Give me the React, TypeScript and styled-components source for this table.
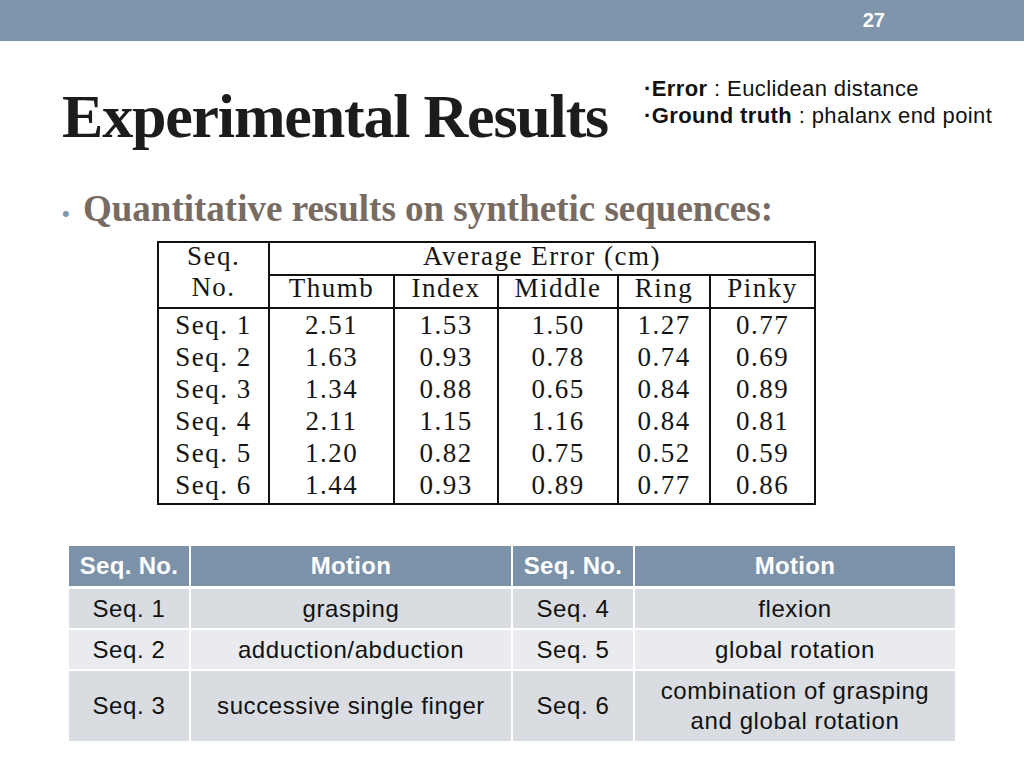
import React from "react";
import styled, { createGlobalStyle } from "styled-components";

const Global = createGlobalStyle`
  html, body { margin: 0; padding: 0; background: #ffffff; }
  body { font-family: "Liberation Sans", Arial, sans-serif; }
`;

const Slide = styled.div`
  width: 1024px;
  height: 768px;
  background: #ffffff;
  overflow: hidden;
  display: flex;
  flex-direction: column;
`;

const TopBar = styled.header`
  height: 41px;
  flex: none;
  background: #7f95ab;
  display: flex;
  justify-content: flex-end;
  align-items: center;
  padding-right: 139px;
`;

const PageNum = styled.span`
  font-family: "Liberation Sans Narrow", "Liberation Sans", Arial, sans-serif;
  font-weight: 700;
  font-size: 20px;
  color: #ffffff;
`;

const TitleRow = styled.div`
  display: grid;
  grid-template-columns: 582px 1fr;
  padding: 34px 0 0 62px;
  align-items: start;
`;

const Title = styled.h1`
  margin: 10px 0 0;
  font-family: "Liberation Serif", "Times New Roman", serif;
  font-weight: 700;
  font-size: 62px;
  line-height: 62px;
  letter-spacing: -1.2px;
  color: #1c1c1c;
  white-space: nowrap;
`;

const Notes = styled.div`
  font-family: "Liberation Sans", Arial, sans-serif;
  font-size: 22px;
  line-height: 27px;
  letter-spacing: 0.4px;
  color: #111111;
`;

const NoteLine = styled.div`
  white-space: nowrap;
`;

const Dot = styled.span`
  font-weight: 700;
`;

const Bold = styled.b`
  font-weight: 700;
`;

const BulletLine = styled.div`
  margin-top: 40px;
  padding-left: 62px;
  display: flex;
  align-items: baseline;
  height: 44px;
`;

const BulletDot = styled.span`
  width: 21px;
  flex: none;
  font-family: "Liberation Sans", Arial, sans-serif;
  font-size: 22px;
  color: #7f95ab;
`;

const BulletText = styled.span`
  font-family: "Liberation Serif", "Times New Roman", serif;
  font-weight: 700;
  font-size: 37px;
  line-height: 44px;
  color: #776b62;
  white-space: nowrap;
`;

const LatexTable = styled.div`
  margin: 10px 0 0 157px;
  width: 659px;
  box-sizing: border-box;
  border: 2px solid #111111;
  display: grid;
  grid-template-columns: 109px 125px 104px 120px 92px 105px;
  grid-template-rows: 33px 33px repeat(5, 32px) 34px;
  font-family: "Liberation Serif", "Times New Roman", serif;
  font-size: 27px;
  letter-spacing: 1.5px;
  color: #151515;
`;

const LCell = styled.div<{ $left?: boolean; $bottom?: boolean; $shift?: number }>`
  box-sizing: border-box;
  display: flex;
  flex-direction: column;
  align-items: center;
  justify-content: center;
  white-space: nowrap;
  border-left: ${(p) => (p.$left ? "2px solid #111111" : "none")};
  border-bottom: ${(p) => (p.$bottom ? "2px solid #111111" : "none")};
  padding-bottom: ${(p) => p.$shift ?? 0}px;
  line-height: 31px;
`;

const StubCell = styled(LCell)`
  grid-column: 1;
  grid-row: 1 / span 2;
`;

const AvgCell = styled(LCell)`
  grid-column: 2 / span 5;
  grid-row: 1;
`;

const MotionTable = styled.div`
  margin: 41px 0 0 69px;
  width: 886px;
  display: grid;
  grid-template-columns: 120px 322px 122px 322px;
  grid-template-rows: 40px 42px 41px 72px;
  font-family: "Liberation Sans", Arial, sans-serif;
  font-size: 24px;
`;

const MCell = styled.div<{ $head?: boolean; $shade?: "dark" | "light"; $first?: boolean; $top?: number }>`
  box-sizing: border-box;
  display: flex;
  align-items: center;
  justify-content: center;
  text-align: center;
  line-height: 30px;
  background: ${(p) => (p.$head ? "#7c92a9" : p.$shade === "light" ? "#e9ebee" : "#d9dde2")};
  color: ${(p) => (p.$head ? "#ffffff" : "#111111")};
  font-weight: ${(p) => (p.$head ? 700 : 400)};
  letter-spacing: ${(p) => (p.$head ? "0.3px" : "0.6px")};
  border-left: ${(p) => (p.$first ? "none" : "2px solid #ffffff")};
  border-top: ${(p) => (p.$top ? `${p.$top}px solid #ffffff` : "none")};
`;

const fingers = ["Thumb", "Index", "Middle", "Ring", "Pinky"];

const results: [string, string[]][] = [
  ["Seq.\u00a01", ["2.51", "1.53", "1.50", "1.27", "0.77"]],
  ["Seq.\u00a02", ["1.63", "0.93", "0.78", "0.74", "0.69"]],
  ["Seq.\u00a03", ["1.34", "0.88", "0.65", "0.84", "0.89"]],
  ["Seq.\u00a04", ["2.11", "1.15", "1.16", "0.84", "0.81"]],
  ["Seq.\u00a05", ["1.20", "0.82", "0.75", "0.52", "0.59"]],
  ["Seq.\u00a06", ["1.44", "0.93", "0.89", "0.77", "0.86"]],
];

const motions: { a: string; am: React.ReactNode; b: string; bm: React.ReactNode; shade: "dark" | "light"; top: number }[] = [
  { a: "Seq. 1", am: "grasping", b: "Seq. 4", bm: "flexion", shade: "dark", top: 3 },
  { a: "Seq. 2", am: "adduction/abduction", b: "Seq. 5", bm: "global rotation", shade: "light", top: 2 },
  {
    a: "Seq. 3",
    am: "successive single finger",
    b: "Seq. 6",
    bm: (
      <>
        combination of grasping
        <br />
        and global rotation
      </>
    ),
    shade: "dark",
    top: 2,
  },
];

export default function App() {
  return (
    <>
      <Global />
      <Slide>
        <TopBar>
          <PageNum>27</PageNum>
        </TopBar>
        <TitleRow>
          <Title>Experimental Results</Title>
          <Notes>
            <NoteLine>
              <Dot>·</Dot>
              <Bold>Error</Bold> : Euclidean distance
            </NoteLine>
            <NoteLine>
              <Dot>·</Dot>
              <Bold>Ground truth</Bold> : phalanx end point
            </NoteLine>
          </Notes>
        </TitleRow>
        <BulletLine>
          <BulletDot>•</BulletDot>
          <BulletText>Quantitative results on synthetic sequences:</BulletText>
        </BulletLine>
        <LatexTable>
          <StubCell $bottom $shift={7}>
            <span>Seq.</span>
            <span>No.</span>
          </StubCell>
          <AvgCell $left $bottom $shift={5}>
            Average Error (cm)
          </AvgCell>
          {fingers.map((f) => (
            <LCell key={f} $left $bottom $shift={7}>
              {f}
            </LCell>
          ))}
          {results.map(([seq, vals], r) => {
            const shift = r === results.length - 1 ? 2 : 0;
            return (
              <React.Fragment key={seq}>
                <LCell $shift={shift}>{seq}</LCell>
                {vals.map((v, i) => (
                  <LCell key={i} $left $shift={shift}>
                    {v}
                  </LCell>
                ))}
              </React.Fragment>
            );
          })}
        </LatexTable>
        <MotionTable>
          <MCell $head $first>Seq. No.</MCell>
          <MCell $head>Motion</MCell>
          <MCell $head>Seq. No.</MCell>
          <MCell $head>Motion</MCell>
          {motions.map((m) => (
            <React.Fragment key={m.a}>
              <MCell $first $shade={m.shade} $top={m.top}>{m.a}</MCell>
              <MCell $shade={m.shade} $top={m.top}>{m.am}</MCell>
              <MCell $shade={m.shade} $top={m.top}>{m.b}</MCell>
              <MCell $shade={m.shade} $top={m.top}>{m.bm}</MCell>
            </React.Fragment>
          ))}
        </MotionTable>
      </Slide>
    </>
  );
}
